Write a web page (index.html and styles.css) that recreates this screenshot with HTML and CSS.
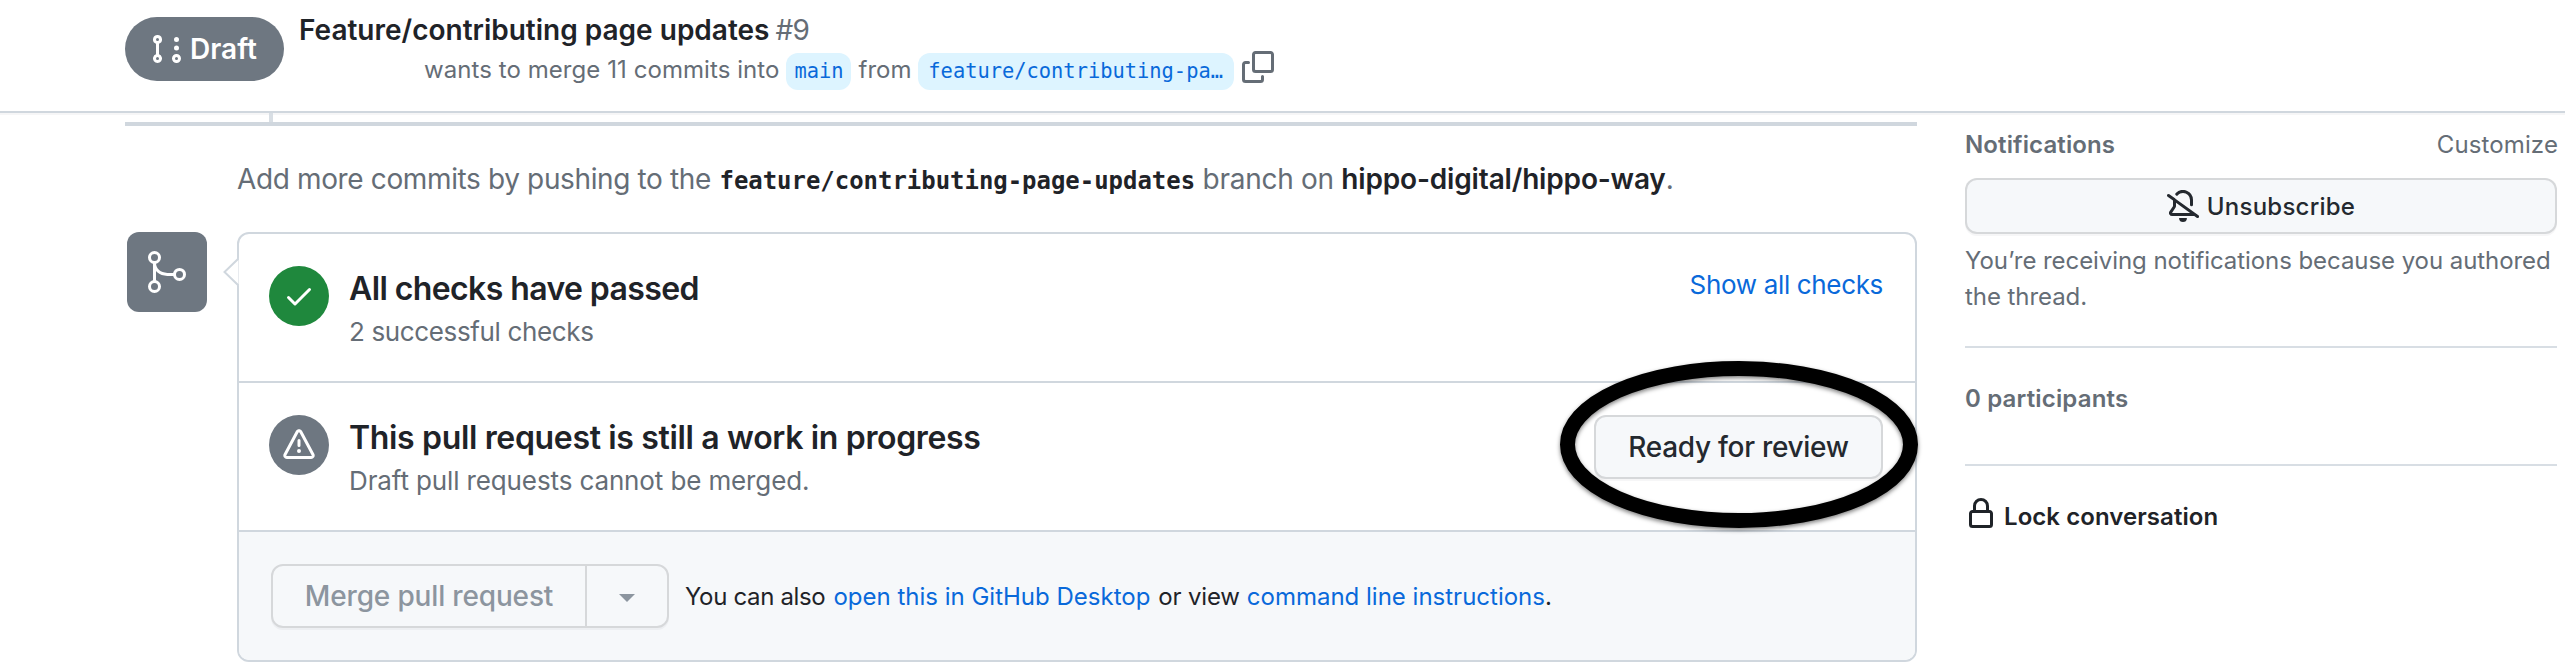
FILE: index.html
```
<!DOCTYPE html>
<html lang="en">
<head>
<meta charset="utf-8">
<title>Feature/contributing page updates #9</title>
<link rel="stylesheet" href="styles.css">
</head>
<body>
<header class="sticky-header">
  <span class="state">
    <svg width="32" height="32" viewBox="0 0 16 16"><path d="M3.25 1A2.25 2.25 0 0 1 4 5.372v5.256a2.251 2.251 0 1 1-1.5 0V5.372A2.251 2.251 0 0 1 3.25 1Zm9.5 14a2.25 2.25 0 1 1 0-4.5 2.25 2.25 0 0 1 0 4.5ZM2.5 3.25a.75.75 0 1 0 1.5 0 .75.75 0 0 0-1.5 0ZM3.25 12a.75.75 0 1 0 0 1.5.75.75 0 0 0 0-1.5Zm9.5 0a.75.75 0 1 0 0 1.5.75.75 0 0 0 0-1.5ZM14 7.5a1.25 1.25 0 1 1-2.5 0 1.25 1.25 0 0 1 2.5 0Zm0-4.25a1.25 1.25 0 1 1-2.5 0 1.25 1.25 0 0 1 2.5 0Z"/></svg>
    <span>Draft</span>
  </span>
  <div class="heading">
    <h1 class="title"><span>Feature/contributing page updates</span><span class="number">#9</span></h1>
    <div class="meta">
      <span>wants to merge 11 commits into</span>
      <a class="branch base">main</a>
      <span class="from">from</span>
      <a class="branch head">feature/contributing-pa…</a>
      <svg class="copy" width="32" height="32" viewBox="0 0 16 16"><path d="M0 6.75C0 5.784.784 5 1.75 5h1.5a.75.75 0 0 1 0 1.5h-1.5a.25.25 0 0 0-.25.25v7.5c0 .138.112.25.25.25h7.5a.25.25 0 0 0 .25-.25v-1.5a.75.75 0 0 1 1.5 0v1.5A1.75 1.75 0 0 1 9.25 16h-7.5A1.75 1.75 0 0 1 0 14.25Z"/><path d="M5 1.75C5 .784 5.784 0 6.75 0h7.5C15.216 0 16 .784 16 1.75v7.5A1.75 1.75 0 0 1 14.25 11h-7.5A1.75 1.75 0 0 1 5 9.25Zm1.75-.25a.25.25 0 0 0-.25.25v7.5c0 .138.112.25.25.25h7.5a.25.25 0 0 0 .25-.25v-7.5a.25.25 0 0 0-.25-.25Z"/></svg>
    </div>
  </div>
</header>

<div class="layout">
  <main class="discussion">
    <div class="timeline-tick"></div>
    <div class="timeline-end"></div>
    <p class="push-hint">
      <span class="tight">Add more commits by pushing to the</span>
      <strong class="ref">feature/contributing-page-updates</strong>
      <span class="on">branch on</span>
      <strong class="repo">hippo-digital/hippo-way</strong><span>.</span>
    </p>

    <div class="merge-row">
      <span class="merge-badge">
        <svg width="48" height="48" viewBox="0 0 24 24" fill="none" stroke="currentColor" stroke-width="1.5"><circle cx="5.75" cy="4.75" r="2.5"/><circle cx="5.75" cy="19.25" r="2.5"/><circle cx="18.25" cy="13.2" r="2.5"/><path d="M5.75 7.3v9.4M5.75 7.4c0 3.5 2.7 5.8 6.4 5.8h3.6"/></svg>
      </span>
      <section class="merge-box">
        <svg class="pointer" width="17" height="30" viewBox="0 0 17 30"><path d="M16.5 1.5 2.5 15l14 13.5"/></svg>
        <div class="item">
          <span class="status passed"><svg width="32" height="32" viewBox="0 0 16 16"><path d="M13.78 4.22a.75.75 0 0 1 0 1.06l-7.25 7.25a.75.75 0 0 1-1.06 0L2.22 9.28a.751.751 0 0 1 .018-1.042.751.751 0 0 1 1.042-.018L6 10.94l6.72-6.72a.75.75 0 0 1 1.06 0Z"/></svg></span>
          <div class="item-text">
            <h2 class="checks-title">All checks have passed</h2>
            <p class="checks-sub">2 successful checks</p>
          </div>
          <a class="show-checks">Show all checks</a>
        </div>
        <div class="item">
          <span class="status"><svg width="32" height="32" viewBox="0 0 16 16"><path d="M6.457 1.047c.659-1.234 2.427-1.234 3.086 0l6.082 11.378A1.75 1.75 0 0 1 14.082 15H1.918a1.75 1.75 0 0 1-1.543-2.575Zm1.763.707a.25.25 0 0 0-.44 0L1.698 13.132a.25.25 0 0 0 .22.368h12.164a.25.25 0 0 0 .22-.368Zm.53 3.996v2.5a.75.75 0 0 1-1.5 0v-2.5a.75.75 0 0 1 1.5 0ZM9 11a1 1 0 1 1-2 0 1 1 0 0 1 2 0Z"/></svg></span>
          <div class="item-text">
            <h2 class="draft-title">This pull request is still a work in progress</h2>
            <p class="draft-sub">Draft pull requests cannot be merged.</p>
          </div>
          <button class="button ready">Ready for review</button>
          <svg class="highlight" width="376" height="186" viewBox="0 0 376 186"><ellipse cx="188" cy="92.5" rx="171.5" ry="76"/></svg>
        </div>
        <div class="actions">
          <div class="button-group">
            <span class="merge-button">Merge pull request</span>
            <span class="merge-options"><svg width="16" height="8" viewBox="0 0 16 8"><path d="M0 0h16L8 8Z"/></svg></span>
          </div>
          <p class="also">
            <span class="you">You can also</span>
            <a class="desktop">open this in GitHub Desktop</a>
            <span class="or">or view</span>
            <a class="cli">command line instructions</a><span>.</span>
          </p>
        </div>
      </section>
    </div>
  </main>

  <aside class="sidebar">
    <div class="side-heading"><strong>Notifications</strong><span class="customize">Customize</span></div>
    <button class="button unsubscribe">
      <svg width="32" height="32" viewBox="0 0 16 16"><path d="m4.182 4.31.016.011 10.104 7.316.013.01 1.375.996a.75.75 0 1 1-.88 1.214L13.626 13H2.518a1.516 1.516 0 0 1-1.263-2.36l1.703-2.554A.255.255 0 0 0 3 7.947V5.305L.31 3.357a.75.75 0 1 1 .88-1.214Zm7.373 7.19L4.5 6.391v1.556c0 .346-.102.683-.294.97l-1.703 2.556a.017.017 0 0 0-.003.01c0 .005.002.009.005.012l.006.004.007.001ZM8 1.5c-.997 0-1.895.416-2.534 1.086A.75.75 0 1 1 4.38 1.55 5 5 0 0 1 13 5v2.373a.75.75 0 0 1-1.5 0V5A3.5 3.5 0 0 0 8 1.5ZM8 16a2 2 0 0 1-1.985-1.75c-.017-.137.097-.25.235-.25h3.5c.138 0 .252.113.235.25A2 2 0 0 1 8 16Z"/></svg>
      <span class="unsubscribe-label">Unsubscribe</span>
    </button>
    <p class="reason">You’re receiving notifications because you authored<br>the thread.</p>
    <div class="participants">0 participants</div>
    <div class="lock">
      <svg width="32" height="32" viewBox="0 0 16 16"><path d="M4 4a4 4 0 0 1 8 0v2h.25c.966 0 1.75.784 1.75 1.75v5.5A1.75 1.75 0 0 1 12.25 15h-8.5A1.75 1.75 0 0 1 2 13.25v-5.5C2 6.784 2.784 6 3.75 6H4Zm8.25 3.5h-8.5a.25.25 0 0 0-.25.25v5.5c0 .138.112.25.25.25h8.5a.25.25 0 0 0 .25-.25v-5.5a.25.25 0 0 0-.25-.25ZM10.5 6V4a2.5 2.5 0 1 0-5 0v2Z"/></svg>
      <span class="lock-label">Lock conversation</span>
    </div>
  </aside>
</div>
</body>
</html>
```
FILE: styles.css
```
* { box-sizing: border-box; }
body {
  margin: 0;
  height: 672px;
  overflow: hidden;
  background: #fff;
  color: #1f2328;
  font: 24px/36px Inter, "Liberation Sans", sans-serif;
  white-space: nowrap;
}
h1, h2, p { margin: 0; font-weight: 400; }
svg { fill: currentColor; flex: none; display: block; }
a { color: #0969da; }
strong { font-weight: 600; }

.sticky-header {
  display: flex;
  align-items: flex-start;
  height: 113px;
  padding-left: 125px;
  border-bottom: 2px solid #d0d7de;
  box-shadow: 0 2px 0 rgba(31, 35, 40, 0.04);
}
.state {
  display: flex;
  align-items: center;
  gap: 7px;
  width: 159px;
  height: 64px;
  margin-top: 17px;
  padding-left: 26px;
  border-radius: 32px;
  background: #6e7781;
  color: #fff;
  font-size: 28px;
  font-weight: 600;
}
.heading { margin: 9px 0 0 15px; }
.title {
  display: flex;
  gap: 6px;
  font-size: 28px;
  line-height: 42px;
  font-weight: 600;
}
.number { font-weight: 400; color: #656d76; letter-spacing: -0.7px; }
.meta {
  display: flex;
  align-items: baseline;
  height: 36px;
  padding: 1px 0 0 125px;
  color: #656d76;
  letter-spacing: 0.066px;
}
.branch {
  padding: 3px 0 4px;
  border-radius: 12px;
  background: #ddf4ff;
  font: 20.4px/30px "DejaVu Sans Mono", monospace;
  letter-spacing: 0;
  text-align: center;
}
.base { width: 65px; margin-left: 7px; }
.from { margin-left: 7px; }
.head { width: 316px; margin-left: 6px; }
.copy { align-self: flex-start; margin: -1px 0 0 8px; }

.layout { display: flex; align-items: flex-start; }
.discussion { width: 1792px; margin-left: 125px; }
.timeline-tick { width: 4px; height: 9px; margin-left: 144px; background: #d8dee4; }
.timeline-end { height: 4px; background: #d0d7de; }
.push-hint {
  display: flex;
  align-items: baseline;
  margin: 32px 0 32px 112px;
  height: 42px;
  font-size: 28px;
  line-height: 42px;
  color: #656d76;
}
.push-hint strong { color: #1f2328; }
.tight { letter-spacing: -0.367px; }
.push-hint .ref {
  margin-left: 8.5px;
  font: 700 23.95px/42px "DejaVu Sans Mono", monospace;
}
.on { margin-left: 7.5px; letter-spacing: -0.271px; }
.repo { margin-left: 7.5px; letter-spacing: -0.17px; }

.merge-row { display: flex; align-items: flex-start; padding-left: 2px; }
.merge-badge {
  display: grid;
  place-items: center;
  width: 80px;
  height: 80px;
  border-radius: 12px;
  background: #6e7781;
  color: #fff;
}
.merge-badge svg { fill: none; }
.merge-box {
  position: relative;
  width: 1680px;
  height: 430px;
  margin-left: 30px;
  border: 2px solid #d0d7de;
  border-radius: 12px;
}
.pointer { position: absolute; left: -17px; top: 23px; }
.pointer path { fill: #fff; stroke: #d0d7de; stroke-width: 2; }
.item {
  position: relative;
  display: flex;
  align-items: flex-start;
  height: 149px;
  padding: 30px 32px 0 30px;
  border-bottom: 2px solid #d0d7de;
}
.status {
  display: grid;
  place-items: center;
  width: 60px;
  height: 60px;
  margin-top: 2px;
  border-radius: 50%;
  background: #6e7781;
  color: #fff;
}
.passed { background: #1f883d; }
.item-text { margin-left: 20px; flex: 1; }
.item-text h2 { padding-top: 1px; font-size: 32px; line-height: 47px; font-weight: 600; }
.item-text p { font-size: 26px; line-height: 39px; color: #656d76; }
.item-text .checks-title { letter-spacing: -0.6px; }
.item-text .checks-sub { letter-spacing: -0.36px; }
.item-text .draft-title { letter-spacing: -0.34px; }
.item-text .draft-sub { letter-spacing: -0.123px; }
.show-checks { margin-top: 1px; font-size: 26px; line-height: 39px; letter-spacing: -0.341px; }
.button {
  display: flex;
  align-items: center;
  justify-content: center;
  padding: 0;
  border: 2px solid rgba(31, 35, 40, 0.15);
  border-radius: 12px;
  background: #f6f8fa;
  color: #24292f;
  font: 500 28px/42px Inter, sans-serif;
  box-shadow: 0 2px 0 rgba(31, 35, 40, 0.04);
}
.ready { width: 289px; height: 64px; margin-top: 2px; letter-spacing: -0.3px; }
.highlight {
  position: absolute;
  left: 1312px;
  top: -31px;
  fill: none;
  stroke: #000;
  stroke-width: 15;
  filter: drop-shadow(0 2px 2px rgba(0, 0, 0, 0.5));
}
.actions {
  display: flex;
  align-items: flex-start;
  height: 128px;
  padding: 32px 0 0 32px;
  border-radius: 0 0 10px 10px;
  background: #f6f8fa;
}
.button-group {
  display: flex;
  width: 398px;
  height: 64px;
  border: 2px solid rgba(31, 35, 40, 0.15);
  border-radius: 12px;
  color: #8c959f;
  box-shadow: 0 2px 0 rgba(31, 35, 40, 0.04);
}
.merge-button {
  width: 314px;
  border-right: 2px solid rgba(31, 35, 40, 0.15);
  font-size: 28px;
  line-height: 60px;
  font-weight: 500;
  letter-spacing: -0.159px;
  text-align: center;
}
.merge-options { flex: 1; display: grid; place-items: center; padding-top: 4px; }
.also { display: flex; margin-left: 16px; padding-top: 1px; line-height: 64px; }
.you { letter-spacing: -0.34px; }
.desktop { margin-left: 8px; }
.or { margin-left: 8px; letter-spacing: -0.173px; }
.cli { margin-left: 7px; }

.sidebar { width: 592px; margin-left: 48px; padding-top: 14px; color: #656d76; }
.side-heading { display: flex; justify-content: space-between; letter-spacing: 0.12px; }
.customize { margin-right: -1px; }
.unsubscribe {
  gap: 8px;
  width: 100%;
  height: 56px;
  margin: 15px 0 9px;
  font-size: 24px;
  letter-spacing: 0.235px;
}
.unsubscribe-label { padding-top: 2px; }
.reason { height: 105px; border-bottom: 2px solid #d8dee4; letter-spacing: -0.068px; }
.participants {
  height: 118px;
  padding-top: 33px;
  border-bottom: 2px solid #d8dee4;
  font-weight: 600;
  letter-spacing: 0.169px;
}
.lock {
  display: flex;
  gap: 7px;
  margin-top: 32px;
  color: #1f2328;
  font-weight: 600;
  letter-spacing: 0.066px;
}
.lock-label { padding-top: 1px; }
```
